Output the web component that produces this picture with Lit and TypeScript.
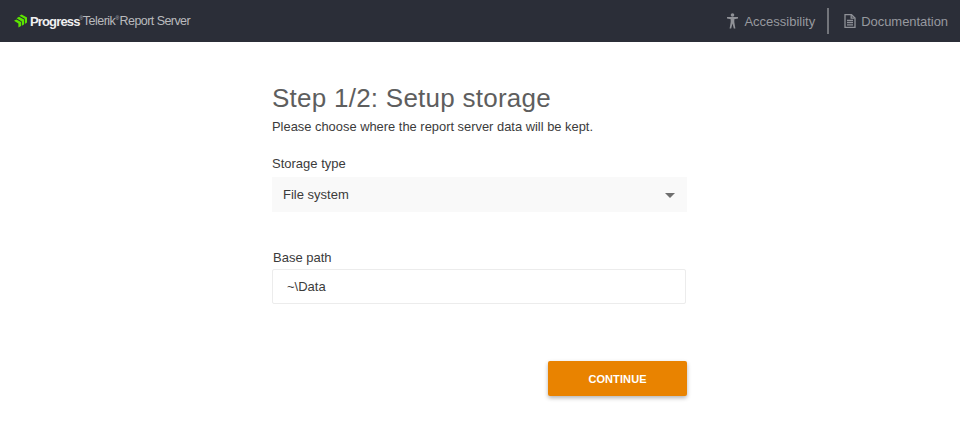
import { css, html, LitElement } from "lit";
import { customElement } from "lit/decorators.js";

@customElement("app-root")
export class AppRoot extends LitElement {
  static styles = css`
    :host {
      display: block;
      width: 960px;
      height: 440px;
      background: #fff;
      font-family: "Liberation Sans", Arial, sans-serif;
      color: #3b3b3b;
      overflow: hidden;
    }

    header {
      height: 42px;
      background: #2b2e38;
      display: flex;
      align-items: center;
      justify-content: space-between;
      padding: 0 12px 0 14px;
      box-sizing: border-box;
    }

    .brand {
      display: flex;
      align-items: center;
      color: #b9babd;
      font-size: 12.5px;
      letter-spacing: -0.5px;
      white-space: nowrap;
    }

    .brand svg {
      margin-right: 2px;
    }

    .brand b {
      color: #f0f0f0;
      font-size: 13px;
      letter-spacing: -0.85px;
    }

    .brand sup {
      font-size: 5px;
      line-height: 1;
      margin: -5px 0 0 0;
      letter-spacing: -0.5px;
    }

    .brand .telerik {
      margin-left: 0;
    }

    .brand .product {
      margin-left: 1px;
      letter-spacing: -0.56px;
    }

    .links {
      display: flex;
      align-items: center;
      color: #97999f;
      font-size: 13px;
    }

    .link {
      display: flex;
      align-items: center;
      gap: 6px;
    }

    .link.doc {
      gap: 5px;
      letter-spacing: -0.05px;
    }

    .sep {
      width: 2px;
      height: 26px;
      background: #73757b;
      margin: 0 15px 0 12px;
    }

    main {
      width: 416px;
      margin: 0 0 0 272px;
      display: flex;
      flex-direction: column;
    }

    h1 {
      margin: 40px 0 0;
      font-size: 26px;
      line-height: 32px;
      font-weight: 400;
      color: #5e5e5e;
      letter-spacing: 0.25px;
    }

    .lead {
      margin: 4px 0 0;
      font-size: 12.9px;
      line-height: 18px;
    }

    .label {
      font-size: 13px;
      line-height: 16px;
    }

    .label.storage {
      margin-top: 20px;
    }

    .select {
      margin-top: 5px;
      height: 35px;
      width: 415px;
      background: #f9f9f9;
      display: flex;
      align-items: center;
      justify-content: space-between;
      padding: 0 12px 0 11px;
      box-sizing: border-box;
      font-size: 13px;
    }

    .caret {
      width: 0;
      height: 0;
      border-left: 5.5px solid transparent;
      border-right: 5.5px solid transparent;
      border-top: 5.5px solid #6f6f6f;
      margin-top: 2px;
    }

    .label.base {
      margin: 38px 0 0 1px;
    }

    .input {
      margin: 3px 0 0 0;
      height: 35px;
      width: 414px;
      border: 1px solid #ececec;
      border-radius: 2px;
      display: flex;
      align-items: center;
      padding: 0 14px;
      box-sizing: border-box;
      font-size: 13px;
    }

    .actions {
      display: flex;
      justify-content: flex-end;
      width: 415px;
      margin-top: 57px;
    }

    button {
      width: 139px;
      height: 35px;
      background: #e98300;
      color: #fff;
      border: none;
      border-radius: 2px;
      font-family: inherit;
      font-size: 11px;
      font-weight: 700;
      letter-spacing: 0.1px;
      box-shadow: 0 2px 4px rgba(0, 0, 0, 0.3);
      padding: 0;
    }
  `;

  render() {
    return html`
      <header>
        <div class="brand">
          <svg width="14" height="14" viewBox="0 0 14 14" fill="#5ce500">
            <path d="M0 6.8 L2.4 5.4 L7 8 V12 L4.4 13.6 V9.4 Z" />
            <path d="M2.6 4.2 L5 2.8 L10 5.6 V10.6 L7.8 11.8 V7.4 Z" />
            <path d="M5.4 1.8 L7.6 .4 L13 3.4 V8.6 L10.8 9.9 V4.8 Z" />
          </svg>
          <b>Progress</b><sup>®</sup><span class="telerik">Telerik</span><sup>®</sup><span class="product">Report Server</span>
        </div>
        <div class="links">
          <div class="link">
            <svg width="11" height="16" viewBox="0 0 11 16" fill="#8f9197">
              <circle cx="5.5" cy="2" r="1.8" />
              <path d="M0 4 H11 V5.6 L7.3 6.2 V9 L8.4 15.5 H6.8 L5.5 10.4 L4.2 15.5 H2.6 L3.7 9 V6.2 L0 5.6Z" />
            </svg>
            Accessibility
          </div>
          <div class="sep"></div>
          <div class="link doc">
            <svg width="12" height="14" viewBox="0 0 12 14" fill="none" stroke="#8f9197" stroke-width="1.3">
              <path d="M1 .7 H7.5 L11 4 V13.3 H1Z" />
              <path d="M3 6.5 H9 M3 8.7 H9 M3 10.9 H9 M7.2 1 V4.2 H10.6" />
            </svg>
            Documentation
          </div>
        </div>
      </header>
      <main>
        <h1>Step 1/2: Setup storage</h1>
        <p class="lead">Please choose where the report server data will be kept.</p>
        <div class="label storage">Storage type</div>
        <div class="select">File system<i class="caret"></i></div>
        <div class="label base">Base path</div>
        <div class="input">~\\Data</div>
        <div class="actions"><button>CONTINUE</button></div>
      </main>
    `;
  }
}
